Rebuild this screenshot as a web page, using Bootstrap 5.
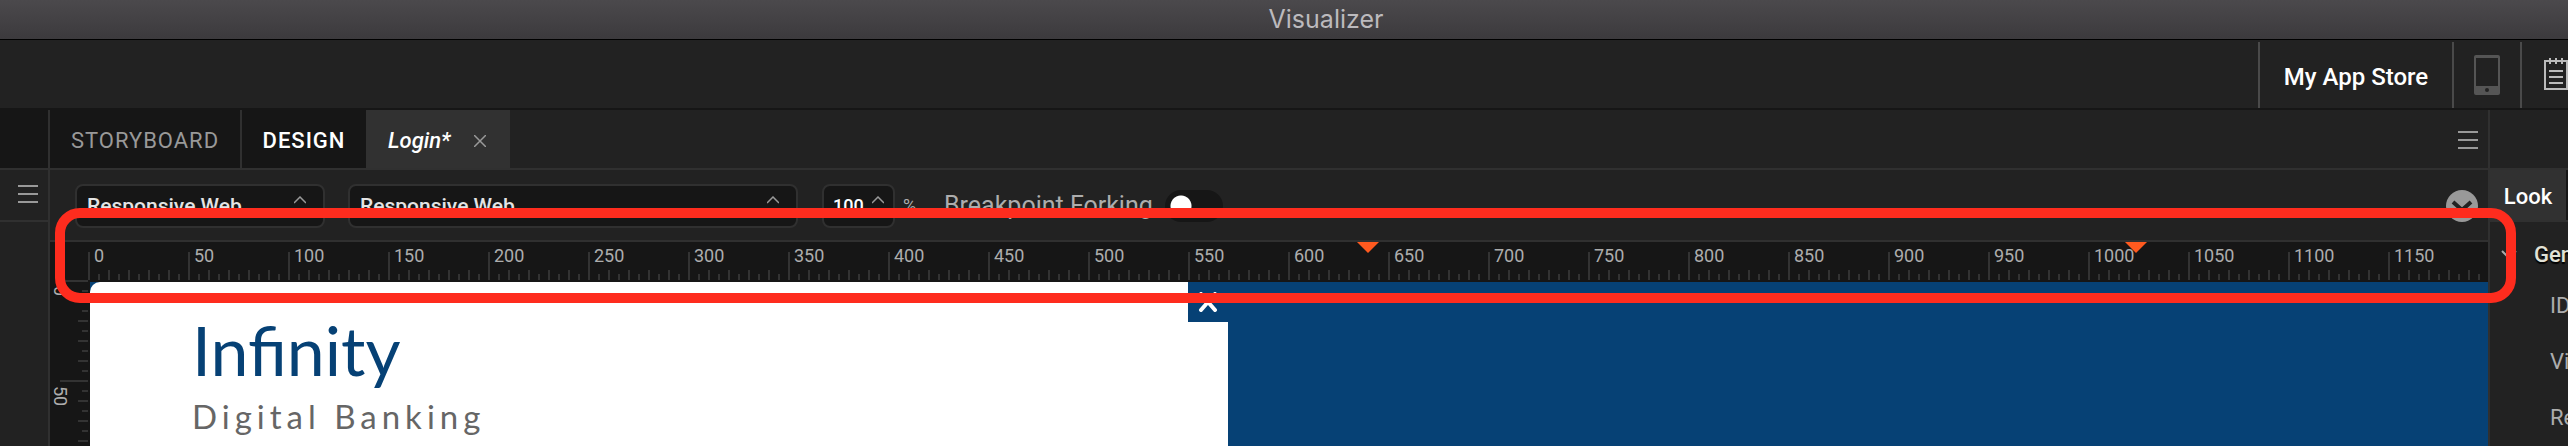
<!DOCTYPE html>
<html lang="en">
<head>
<meta charset="utf-8">
<meta name="viewport" content="width=device-width, initial-scale=1">
<title>Visualizer</title>
<link href="https://cdn.jsdelivr.net/npm/bootstrap@5.3.0/dist/css/bootstrap.min.css" rel="stylesheet">
<script src="https://cdn.jsdelivr.net/npm/bootstrap@5.3.0/dist/js/bootstrap.bundle.min.js"></script>
<style>
  :root { --panel:#222; --deep:#161616; --line:#303030; --muted:#adadad; --brand:#064175; --mark:#fe2c1e; }
  body { font-family:Roboto,sans-serif; font-size:22px; line-height:28px; background:var(--panel); color:var(--muted); }
  button, a { color:inherit; font:inherit; text-decoration:none; white-space:nowrap; }
  button { background:none; border:0; padding:0; }
  svg { display:block; flex:none; }
  .titlebar { height:40px; font:25px/30px Inter,sans-serif; color:#bcbabd; padding-left:84px; padding-bottom:2px;
    background:linear-gradient(#4b494c,#3c3a3d); border-bottom:1px solid #000; }
  .appbar { height:70px; padding-top:2px; border-bottom:2px solid var(--deep); }
  .appbar > * { border-left:2px solid #4a4a4a; }
  .store { width:194px; padding-top:4px; font-size:24px; font-weight:500; color:#fff; }
  .device { width:68px; }
  .notes { width:48px; padding-left:22px; padding-bottom:2px; overflow:hidden; }
  main, .workspace { min-height:0; overflow:hidden; }
  .leftrail { width:50px; border-right:2px solid var(--line); }
  .tabline, .tools, .ruler-top { flex-shrink:0; }
  .tabline { height:60px; border-bottom:2px solid var(--line); }
  .railmenu { height:52px; border-bottom:2px solid var(--line); padding:0 0 3px 18px; }
  .tabline > * { padding-top:3px; }
  .tabline > button { letter-spacing:1px; background:var(--deep); }
  .t-story { width:192px; border-right:2px solid var(--line)!important; color:#999; }
  .t-design { width:124px; font-weight:500; color:#fff; }
  .tabline > .t-login { width:144px; padding-left:22px; gap:23px; background:#313131; color:#fff; }
  .t-login a { font-style:italic; font-weight:500; }
  .tools { height:72px; padding:14px 10px 12px 25px; border-bottom:2px solid var(--line); }
  .field { height:44px; background:var(--deep); border:2px solid var(--line); border-radius:8px; padding:0 17px 0 10px; }
  .field select, .field input { appearance:none; background:none; border:0; padding:0; color:#e4e4e4; font:500 21px/28px Roboto,sans-serif; outline:0; min-width:0; }
  .field svg { margin-bottom:12px; }
  .f-platform { width:250px; margin-right:23px; }
  .f-device { width:450px; margin-right:24px; }
  .f-zoom { width:73px; margin-right:8px; padding:0 9px; }
  .field input { font-size:18px; color:#fff; width:34px; }
  .unit { width:14px; font-size:18px; }
  .fork { font-size:25px; margin-left:27px; gap:12px; }
  .fork input { appearance:none; width:58px; height:32px; border-radius:16px; margin:0;
    background:radial-gradient(circle at 16px 16px,#fff 10px,transparent 11px) var(--deep); }
  .ruler-top { height:40px; padding-left:38px; background:var(--deep); }
  .scale-x { height:40px; --t:#333;
    background:
      repeating-linear-gradient(to right,var(--t) 0 2px,transparent 2px 100px) 0 10px/100% 28px no-repeat,
      repeating-linear-gradient(to right,var(--t) 0 2px,transparent 2px 20px) 0 28px/100% 10px no-repeat,
      repeating-linear-gradient(to right,var(--t) 0 2px,transparent 2px 10px) 0 32px/100% 6px no-repeat; }
  .scale-x span { flex:0 0 100px; padding-left:6px; font-size:18px; line-height:28px; }
  .breakpoint { top:0; width:22px; height:11px; margin-left:-11px; background:#ff5a1f; clip-path:polygon(0 0,100% 0,50% 100%); }
  .bp-640 { left:1280px; }
  .bp-1024 { left:2048px; }
  .ruler-left { width:40px; margin-top:-2px; padding-right:2px; background:var(--deep); }
  .scale-y { --t:#333;
    background:
      repeating-linear-gradient(to bottom,var(--t) 0 2px,transparent 2px 100px) 100% 0/28px 100% no-repeat,
      repeating-linear-gradient(to bottom,var(--t) 0 2px,transparent 2px 20px) 100% 0/10px 100% no-repeat,
      repeating-linear-gradient(to bottom,var(--t) 0 2px,transparent 2px 10px) 100% 0/6px 100% no-repeat; }
  .scale-y span { writing-mode:vertical-rl; flex:0 0 100px; padding-top:6px; font-size:18px; line-height:20px; }
  .stage { background:var(--brand); }
  .page-form { width:1138px; padding:28px 0 0 102px; border-top-left-radius:10px; background:#fff; }
  .closer { width:40px; height:40px; top:0; right:0; background:var(--brand); }
  .logo-name { font:68px/80px Lato,sans-serif; color:var(--brand); }
  .logo-sub { font:33px/40px Lato,sans-serif; letter-spacing:5px; color:#666; margin-top:6px; }
  .inspector { width:80px; border-left:2px solid var(--line); overflow:hidden; }
  .look { height:52px; background:var(--deep); border-bottom:2px solid var(--line); }
  .look a { width:76px; padding-top:3px; background:#313131; color:#fff; font-weight:500; }
  .group { height:70px; padding:0 0 4px 11px; gap:17px; font-weight:500; color:#e2e2d6; text-shadow:0 2px 1px #000; }
  .prop { height:56px; padding-left:60px; white-space:nowrap; }
  .callout-frame { left:5px; right:-28px; top:98px; height:95px; border:10px solid var(--mark); border-radius:25px; pointer-events:none; z-index:5; }
</style>
</head>
<body class="d-flex flex-column vh-100 overflow-hidden">
<header>
  <div class="titlebar d-flex align-items-center justify-content-center">Visualizer</div>
  <nav class="appbar d-flex justify-content-end">
    <button class="store">My App Store</button>
    <button class="device d-flex align-items-center justify-content-center" aria-label="Device preview">
      <svg width="26" height="40" viewBox="0 0 26 40"><rect width="26" height="40" rx="2" fill="#555"/><path d="M2 3h22v28H2z" fill="#222"/><circle cx="13" cy="35" r="2" fill="#222"/></svg>
    </button>
    <button class="notes d-flex align-items-center" aria-label="Notes">
      <svg width="28" height="32" viewBox="0 0 28 32" fill="none" stroke="#bbb" stroke-width="2"><path d="M1 3h22v28H1zM5 13h14M5 19h14M5 25h14M6 0v6M12 0v6M18 0v6"/></svg>
    </button>
  </nav>
</header>
<main class="d-flex flex-fill">
  <aside class="leftrail flex-shrink-0">
    <div class="tabline" style="background:var(--deep)"></div>
    <button class="railmenu d-flex align-items-center w-100" aria-label="Panel menu">
      <svg width="20" height="20" viewBox="0 0 20 20" stroke="#999" stroke-width="2"><path d="M0 2h20M0 10h20M0 18h20"/></svg>
    </button>
  </aside>
  <section class="d-flex flex-column flex-fill position-relative" style="min-width:0">
    <div class="tabline d-flex">
      <button class="t-story">STORYBOARD</button>
      <button class="t-design">DESIGN</button>
      <div class="t-login d-flex align-items-center">
        <a href="#login">Login*</a>
        <button aria-label="Close tab"><svg width="12" height="12" viewBox="0 0 12 12" stroke="#999" stroke-width="1.5"><path d="M0 0l12 12M12 0L0 12"/></svg></button>
      </div>
      <button class="ms-auto d-flex align-items-center" style="background:none" aria-label="Tab list">
        <svg class="me-2" width="22" height="20" viewBox="0 0 22 20" stroke="#999" stroke-width="2"><path d="M0 1h20M0 9h20M0 17h20"/></svg>
      </button>
    </div>
    <div class="tools d-flex align-items-center">
      <div class="field f-platform d-flex align-items-center">
        <select class="flex-fill" aria-label="Platform"><option>Responsive Web</option></select>
        <svg width="12" height="8" viewBox="0 0 12 8" fill="none" stroke="#999" stroke-width="1.5"><path d="M0 7l6-6 6 6"/></svg>
      </div>
      <div class="field f-device d-flex align-items-center">
        <select class="flex-fill" aria-label="Device"><option>Responsive Web</option></select>
        <svg width="12" height="8" viewBox="0 0 12 8" fill="none" stroke="#999" stroke-width="1.5"><path d="M0 7l6-6 6 6"/></svg>
      </div>
      <div class="field f-zoom d-flex align-items-center">
        <input class="flex-fill" id="zoom" type="text" value="100">
        <svg width="12" height="8" viewBox="0 0 12 8" fill="none" stroke="#999" stroke-width="1.5"><path d="M0 7l6-6 6 6"/></svg>
      </div>
      <label for="zoom" class="unit">%</label>
      <div class="fork d-flex align-items-center">
        <label for="fork">Breakpoint Forking</label>
        <input id="fork" type="checkbox" role="switch">
      </div>
      <button class="ms-auto" aria-label="More options">
        <svg width="32" height="32" viewBox="0 0 32 32"><circle cx="16" cy="16" r="16" fill="#999"/><path d="M7 12l9 8 9-8" fill="none" stroke="#222" stroke-width="4"/></svg>
      </button>
    </div>
    <div class="ruler-top">
      <div class="scale-x d-flex overflow-hidden position-relative">
        <span>0</span><span>50</span><span>100</span><span>150</span><span>200</span><span>250</span><span>300</span><span>350</span><span>400</span><span>450</span><span>500</span><span>550</span><span>600</span><span>650</span><span>700</span><span>750</span><span>800</span><span>850</span><span>900</span><span>950</span><span>1000</span><span>1050</span><span>1100</span><span>1150</span>
        <i class="breakpoint bp-640 position-absolute"></i>
        <i class="breakpoint bp-1024 position-absolute"></i>
      </div>
    </div>
    <div class="workspace-row d-flex flex-fill" style="min-height:0">
      <div class="ruler-left d-flex">
        <div class="scale-y d-flex flex-column align-items-start flex-fill overflow-hidden"><span>0</span><span>50</span></div>
      </div>
      <div class="stage flex-fill d-flex">
        <div class="page-form position-relative">
          <div class="logo-name">Infinity</div>
          <div class="logo-sub">Digital Banking</div>
          <button class="closer position-absolute d-flex align-items-center justify-content-center" aria-label="Close">
            <svg width="20" height="20" viewBox="0 0 20 20" stroke="#fff" stroke-width="4" stroke-linecap="round"><path d="M3 2l14 16M17 2L3 18"/></svg>
          </button>
        </div>
      </div>
    </div>
    <div class="callout-frame position-absolute"></div>
  </section>
  <aside class="inspector flex-shrink-0">
    <div class="tabline"></div>
    <div class="look d-flex"><a href="#look" class="d-flex align-items-center justify-content-center">Look</a></div>
    <div class="group d-flex align-items-center">
      <svg width="16" height="10" viewBox="0 0 16 10" fill="none" stroke="#aaa" stroke-width="2"><path d="M1 1l7 7 7-7"/></svg>
      <span>General</span>
    </div>
    <div class="prop">ID</div>
    <div class="prop">Visible</div>
    <div class="prop">Render</div>
  </aside>
</main>
</body>
</html>
